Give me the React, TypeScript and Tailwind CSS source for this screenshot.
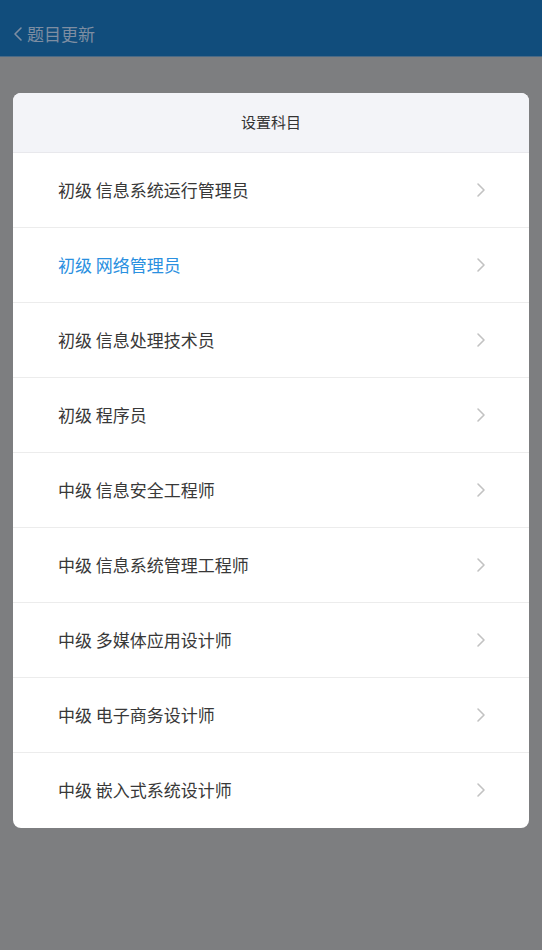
import React from "react";

const items: { label: string; active?: boolean }[] = [
  { label: "初级 信息系统运行管理员" },
  { label: "初级 网络管理员", active: true },
  { label: "初级 信息处理技术员" },
  { label: "初级 程序员" },
  { label: "中级 信息安全工程师" },
  { label: "中级 信息系统管理工程师" },
  { label: "中级 多媒体应用设计师" },
  { label: "中级 电子商务设计师" },
  { label: "中级 嵌入式系统设计师" },
];

function Chevron({ className, left }: { className?: string; left?: boolean }) {
  return (
    <svg width="10" height="16" viewBox="0 0 10 16" className={className}>
      <path
        d={left ? "M8 2 L2 8 L8 14" : "M2 2 L8 8 L2 14"}
        fill="none"
        stroke="currentColor"
        strokeWidth="1.6"
        strokeLinecap="round"
        strokeLinejoin="round"
      />
    </svg>
  );
}

export default function App() {
  return (
    <div
      className="w-[542px] h-[950px] bg-[#7d7e80] flex flex-col overflow-hidden"
      style={{ fontFamily: '"Noto Sans CJK SC", "Noto Sans", sans-serif' }}
    >
      <div className="h-[57px] bg-[#114d7c] border-b border-[#4a6a86] flex items-center pl-[13px] pt-[11px] shrink-0">
        <Chevron left className="text-[#7e8ea2] w-[10px] h-[16px]" />
        <span className="text-[17px] text-[#7e8ea2] ml-[4px] leading-none">题目更新</span>
      </div>
      <div className="px-[13px] pt-[36px]">
        <div className="bg-white rounded-[8px] overflow-hidden">
          <div className="h-[60px] bg-[#f3f4f8] flex items-center justify-center border-b border-[#e8e8ec]">
            <span className="text-[15px] text-[#333]">设置科目</span>
          </div>
          {items.map((it, i) => (
            <div
              key={i}
              className={`h-[75px] flex items-center justify-between pl-[45px] pr-[43px] pb-[1px] ${i < items.length - 1 ? "border-b border-[#ececec]" : ""}`}
            >
              <span className={`text-[17px] ${it.active ? "text-[#2a90e0]" : "text-[#383838]"}`}>{it.label}</span>
              <Chevron className="text-[#c2c2c2]" />
            </div>
          ))}
        </div>
      </div>
    </div>
  );
}
